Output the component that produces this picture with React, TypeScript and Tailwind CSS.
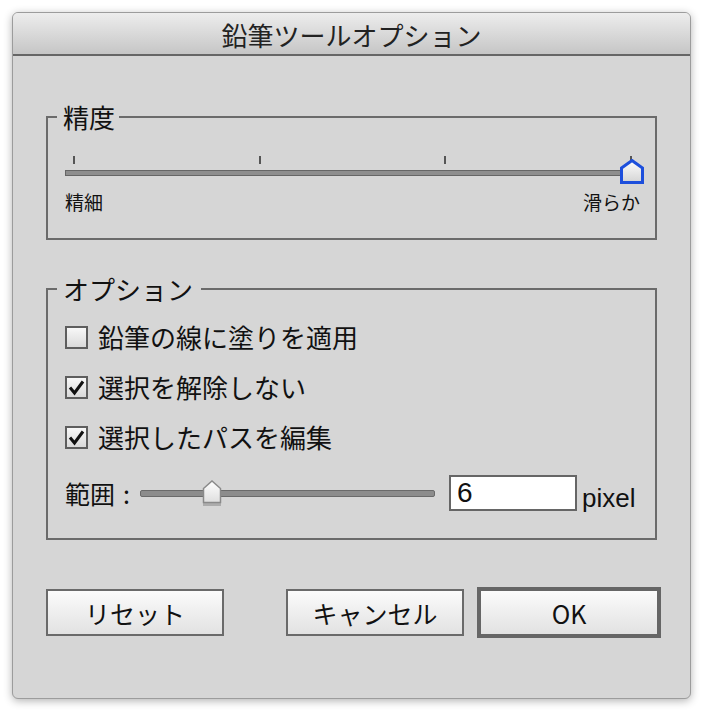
import React from "react";

// --- Fonts ---
const jp = "font-['Noto_Sans_CJK_JP',sans-serif]";
const latin = "font-['Liberation_Sans',sans-serif]";

// --- Checkbox row ---
const CheckRow: React.FC<{ checked: boolean; label: string }> = ({ checked, label }) => (
  <div className="h-[50px] flex items-center">
    <div className="w-[23px] h-[23px] border-2 border-[#5e5e5e] bg-gradient-to-b from-[#f8f8f8] to-[#dadada] flex items-center justify-center">
      {checked && (
        <svg width="17" height="17" viewBox="0 0 17 17">
          <path d="M2 8.5 L6.5 14 L15 2.5" fill="none" stroke="#111" strokeWidth="3" />
        </svg>
      )}
    </div>
    <span className="ml-[10px] text-[26px] leading-[30px] text-[#111]">{label}</span>
  </div>
);

// --- Push button ---
const Button: React.FC<{ label: string; primary?: boolean; className?: string }> = ({
  label,
  primary,
  className = "",
}) => (
  <div
    className={`shrink-0 flex items-center justify-center bg-gradient-to-b from-[#fbfbfb] to-[#e2e2e2] text-[25px] leading-[30px] text-[#111] ${
      primary ? "w-[184px] h-[51px] border-4 border-[#666]" : "w-[178px] h-[47px] border-2 border-[#6a6a6a]"
    } ${className}`}
  >
    {label}
  </div>
);

export default function App() {
  return (
    <div className={`min-h-screen bg-white pt-[12px] pl-[12px] ${jp}`}>
      {/* --- Dialog window --- */}
      <div className="w-[679px] h-[687px] rounded-[6px] bg-[#d6d6d6] border border-[#9c9c9c] shadow-[0_2px_9px_rgba(0,0,0,0.3)] overflow-hidden flex flex-col">
        {/* Title bar */}
        <div className="h-[43px] shrink-0 border-b-2 border-[#666] bg-gradient-to-b from-[#ededed] to-[#c6c6c6] flex items-center justify-center pt-[3px]">
          <span className="text-[26px] leading-[30px] text-[#222]">鉛筆ツールオプション</span>
        </div>

        {/* Body */}
        <div className="px-[33px] pt-[46px]">
          {/* --- 精度 --- */}
          <fieldset className="border-2 border-[#6b6b6b] pl-[17px] pr-[15px] pt-[22px] pb-[24px]">
            <legend className="-ml-[8px] pl-[6px] pr-[4px] text-[26px] leading-[30px] text-[#111]">精度</legend>
            <div className="relative h-[30px] w-[575px]">
              {/* ticks */}
              <div className="absolute left-0 top-[2px] w-full px-[8px] flex justify-between">
                <div className="w-[2px] h-[8px] bg-[#555]" />
                <div className="w-[2px] h-[8px] bg-[#555]" />
                <div className="w-[2px] h-[8px] bg-[#555]" />
                <div className="w-[2px] h-[8px] bg-[#555]" />
              </div>
              {/* track */}
              <div className="absolute left-0 top-[16px] w-[567px] h-[6px] bg-[#8e8e8e] border border-[#666]" />
              {/* thumb */}
              <svg className="absolute left-[555px] top-[5px]" width="24" height="25" viewBox="0 0 24 25">
                <defs>
                  <linearGradient id="tg" x1="0" y1="0" x2="0" y2="1">
                    <stop offset="0" stopColor="#fdfdfd" />
                    <stop offset="1" stopColor="#d4d4d4" />
                  </linearGradient>
                </defs>
                <polygon points="1.5,9 12,1.5 22.5,9 22.5,23.5 1.5,23.5" fill="url(#tg)" stroke="#1d4fdc" strokeWidth="3" />
              </svg>
            </div>
            <div className="mt-[6px] flex justify-between text-[19px] leading-[24px] text-[#111]">
              <span>精細</span>
              <span>滑らか</span>
            </div>
          </fieldset>

          {/* --- オプション --- */}
          <fieldset className="mt-[34px] border-2 border-[#6b6b6b] pl-[17px] pr-[15px] pt-[8px] pb-[27px]">
            <legend className="-ml-[8px] pl-[6px] pr-[8px] text-[26px] leading-[30px] text-[#111]">オプション</legend>
            <CheckRow checked={false} label="鉛筆の線に塗りを適用" />
            <CheckRow checked label="選択を解除しない" />
            <CheckRow checked label="選択したパスを編集" />

            {/* 範囲 */}
            <div className="mt-[13px] h-[36px] flex items-center">
              <span className="w-[75px] shrink-0 text-[25px] leading-[30px] text-[#111]">
                範囲<span className="ml-[8px]">:</span>
              </span>
              <div className="relative shrink-0 w-[295px] h-[7px] rounded-[2px] bg-[#8c8c8c] border border-[#6a6a6a]">
                <svg className="absolute left-[61px] -top-[11px]" width="20" height="28" viewBox="0 0 20 28">
                  <defs>
                    <linearGradient id="rg" x1="0" y1="0" x2="0" y2="1">
                      <stop offset="0" stopColor="#ffffff" />
                      <stop offset="1" stopColor="#dedede" />
                    </linearGradient>
                  </defs>
                  <rect x="1" y="22" width="18" height="4" fill="#9a9a9a" opacity="0.7" />
                  <polygon points="1.5,8.5 10,1 18.5,8.5 18.5,22.5 1.5,22.5" fill="url(#rg)" stroke="#8a8a8a" strokeWidth="1.5" />
                </svg>
              </div>
              <div className={`shrink-0 ml-[14px] w-[128px] h-[36px] bg-white border-2 border-[#666] pl-[6px] flex items-center text-[28px] leading-[32px] text-[#111] ${latin}`}>
                6
              </div>
              <span className={`ml-[5px] mt-[10px] text-[26px] leading-[30px] text-[#111] ${latin}`}>pixel</span>
            </div>
          </fieldset>

          {/* --- Buttons --- */}
          <div className="mt-[47px] h-[51px] flex items-center">
            <Button label="リセット" />
            <Button label="キャンセル" className="ml-[62px]" />
            <Button label="OK" primary className="ml-[13px]" />
          </div>
        </div>
      </div>
    </div>
  );
}
